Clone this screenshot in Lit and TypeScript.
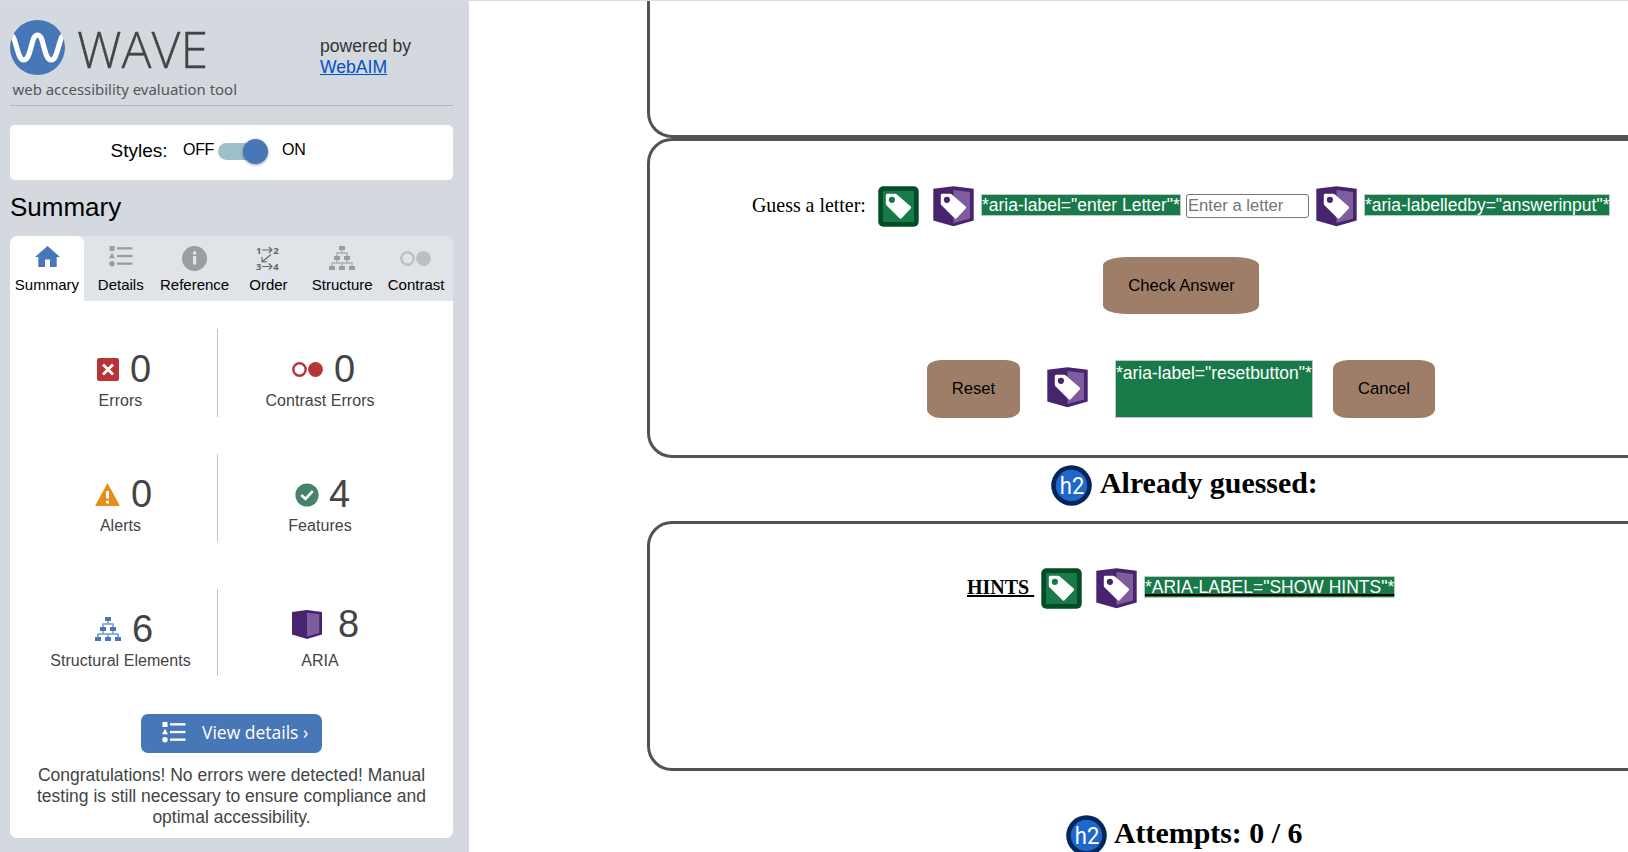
import { LitElement, html, svg, css } from "lit";
import { customElement } from "lit/decorators.js";

const tag = svg`
  <path fill="#fff" d="M9.300 7.700H17c.7 0 1.400.3 1.900.8L32.400 20.300c.9.8.9 1.700.1 2.500L23.900 32c-.8.9-1.800.9-2.600.1L8.700 19.600c-.6-.6-.9-1.200-.9-1.900V9.200c0-.9.6-1.500 1.500-1.500z"/>`;

const labelIcon = html`<svg class="mark" width="41" height="41" viewBox="0 0 41 41">
  <rect x=".3" y=".3" width="40.4" height="40.4" rx="5" fill="#014d25"/>
  <rect x="5" y="5" width="31" height="31" rx="1" fill="#177a48"/>
  ${tag}<circle cx="13.900" cy="13.800" r="3.100" fill="#177a48"/>
</svg>`;

const ariaIcon = html`<svg class="mark" width="41" height="41" viewBox="0 0 41 41">
  <path fill="#48246f" d="M.3 2.800 20.500.2 40.700 2.800V34.600L20.500 40.200.3 34.600z"/>
  <path fill="#7e5c9e" d="M20.500 3.900 37 6v26.600l-16.500 4.300z"/>
  ${tag}<circle cx="13.900" cy="13.800" r="3.100" fill="#48246f"/>
</svg>`;

const h2Icon = html`<svg class="mark" width="41" height="41" viewBox="0 0 41 41">
  <circle cx="20.500" cy="20.500" r="20.300" fill="#04265a"/>
  <circle cx="20.500" cy="20.500" r="15.700" fill="#1f68cb"/>
  <text x="8.800" y="28.800" class="h2t" textLength="24.500" lengthAdjust="spacingAndGlyphs">h2</text>
</svg>`;

const list = (w: number, h: number) => html`<svg width=${w} height=${h} viewBox="0 0 24 21">
  <g fill="currentColor">
    <rect x=".5" y="0" width="5" height="5"/><path d="M3 6.800 6 12.200H0z"/><circle cx="3" cy="17.700" r="2.700"/>
    <rect x="8" y="1.200" width="15.500" height="2.300"/><rect x="8" y="8.900" width="15.500" height="2.300"/><rect x="8" y="16.500" width="15.500" height="2.300"/>
  </g></svg>`;

const tree = html`<svg width="26" height="24" viewBox="0 0 26 24">
  <g fill="currentColor"><rect x="10" width="6" height="4"/><rect x="5" y="10" width="6" height="4"/><rect x="15" y="10" width="6" height="4"/>
  <rect y="20" width="6" height="4"/><rect x="10" y="20" width="6" height="4"/><rect x="20" y="20" width="6" height="4"/></g>
  <path d="M13 4v3M8 10V7h10v3M8 14v3M18 14v3M3 20v-3h20v3M13 17v3" fill="none" stroke="currentColor" stroke-width="1.500" opacity=".75"/>
</svg>`;

const circles = html`<svg width="31" height="15" viewBox="0 0 31 15">
  <circle cx="7.500" cy="7.500" r="6.200" fill="none" stroke="currentColor" stroke-width="2.400"/>
  <circle cx="23.500" cy="7.500" r="7.400" fill="currentColor"/></svg>`;

const tabs = [
  { name: "Summary", cls: "home", icon: html`<svg width="25" height="21" viewBox="0 0 25 21"><path fill="currentColor" d="M12.500 0 25 11h-3.300v10H15v-7.500h-5V21H3.300V11H0z"/></svg>` },
  { name: "Details", cls: "", icon: list(24, 21) },
  { name: "Reference", cls: "", icon: html`<svg width="25" height="25" viewBox="0 0 25 25"><circle cx="12.500" cy="12.500" r="12.500" fill="currentColor"/><rect x="11" y="5.500" width="3.200" height="3" fill="#e0e3e8"/><rect x="11" y="10" width="3.200" height="8.500" fill="#e0e3e8"/></svg>` },
  { name: "Order", cls: "order", icon: html`<svg width="25" height="25" viewBox="0 0 25 25">
    <g class="num"><text x="0" y="7.700">1</text><text x="17.300" y="7.700">2</text><text x="0" y="24.200">3</text><text x="17.300" y="24.200">4</text></g>
    <path d="M6 4h10M12.800 1l3.200 3-3.200 3M6 20.500h10M12.800 17.500l3.200 3-3.200 3M15 8.500 6.500 15.500M6 11v4.800h5" fill="none" stroke="currentColor" stroke-width="1.100"/></svg>` },
  { name: "Structure", cls: "", icon: tree },
  { name: "Contrast", cls: "pale", icon: circles },
];

const stats = [
  { name: "Errors", n: "0", cls: "errors", icon: html`<svg width="22" height="23" viewBox="0 0 22 23"><rect width="22" height="23" rx="2" fill="#b93436"/><path d="M6 6.500l10 10M16 6.500l-10 10" stroke="#fff" stroke-width="2.800"/></svg>` },
  { name: "Contrast Errors", n: "0", cls: "contrast", icon: circles },
  { name: "Alerts", n: "0", cls: "alerts", icon: html`<svg width="25" height="23" viewBox="0 0 25 23"><path fill="#e58e1a" d="M12.500 0 25 23H0z"/><path d="M11 8h3v7.500h-3zM11 17.800h3v2.700h-3z" fill="#fff"/></svg>` },
  { name: "Features", n: "4", cls: "features", icon: html`<svg width="24" height="24" viewBox="0 0 24 24"><circle cx="12" cy="12" r="11.600" fill="#468468"/><path d="M6.300 12l4.200 4 7.200-7.800" fill="none" stroke="#fff" stroke-width="2.600"/></svg>` },
  { name: "Structural Elements", n: "6", cls: "structural", icon: tree },
  { name: "ARIA", n: "8", cls: "aria", icon: html`<svg width="30" height="29" viewBox="0 0 30 29"><path fill="#48246f" d="M0 1.900 15 0l15 1.900v22.600l-15 4.500-15-4.500z"/><path fill="#7e5c9e" d="M15 2.700 27.300 4.200v18.700L15 26.400z"/></svg>` },
];

@customElement("wave-sidebar")
class WaveSidebar extends LitElement {
  static styles = css`
    :host { display: block; width: 469px; height: 851px; padding: 0 16px 0 10px; background: #d4d9e0; font-family: "Liberation Sans", Arial, sans-serif; color: #444; box-sizing: border-box; }
    * { box-sizing: border-box; }
    svg { display: block; overflow: visible; flex: none; }
    .head { height: 105px; border-bottom: 1px solid #b4b6b8; display: flex; }
    .word { font: 300 50px "Open Sans", sans-serif; fill: #444; stroke: #444; stroke-width: .3px; }
    .tagline { font: 15px "Noto Sans", sans-serif; fill: #555; }
    .powered { margin: 35px 0 0 80px; font-size: 17.600px; line-height: 21px; white-space: nowrap; color: #333; }
    .powered a { color: #0050c8; text-decoration: underline; }
    .styles { margin-top: 19px; height: 55px; background: #fff; border-radius: 5px; display: flex; color: #000; padding-left: 100px; white-space: nowrap; }
    .styles .cap { font-size: 19px; line-height: 51px; width: 73px; padding-left: .5px; }
    .styles .opt { font-size: 16px; letter-spacing: -.3px; line-height: 49px; width: 35px; }
    .styles .on { padding-left: 22px; letter-spacing: -.1px; }
    .track { width: 42px; height: 17px; margin-top: 18px; border-radius: 9px; background: #9fc0ca; display: flex; align-items: center; justify-content: flex-end; }
    .knob { width: 25px; height: 25px; margin-right: -8px; flex: none; border-radius: 50%; background: #4877b7; box-shadow: 0 1px 3px rgba(0,0,0,.4); }
    h2 { margin: 0; height: 56px; font-weight: 400; font-size: 26px; line-height: 54px; color: #000; }
    .tabs { display: grid; grid-template-columns: repeat(6, 1fr); height: 65px; background: #e0e3e8; border-radius: 7px 7px 0 0; overflow: hidden; }
    .tab { display: flex; flex-direction: column; align-items: center; padding-top: 10px; color: #9b9ea1; }
    .tab .i { height: 29px; }
    .tab .l { font-size: 15px; line-height: 20px; color: #000; }
    .home { background: #fff; color: #4877b7; border-radius: 7px 7px 0 0; }
    .home .i { padding-left: 2px; }
    .order { color: #666; }
    .num { font: bold 9.500px "Noto Sans", sans-serif; fill: #666; }
    .pale { color: #bcbfc4; }
    .pale .i { padding: 5px 2px 0 0; }
    .panel { height: 537px; background: #fff; border-radius: 0 0 7px 7px; padding-top: 28px; }
    .grid { display: grid; grid-template-columns: 196px 204px; grid-template-rows: 88px 88px 87px; row-gap: 37px; padding-left: 12px; height: 347px; }
    .stat { display: flex; flex-direction: column; text-align: center; padding-top: 20px; }
    .stat:nth-child(odd) { border-right: 1px solid #c4c4c4; }
    .stat:nth-child(odd) .l { padding-left: 2px; }
    .stat:nth-child(n+5) { margin-top: 10px; margin-bottom: -10px; }
    .fig { display: flex; height: 42px; }
    .fig b { font-weight: 400; font-size: 38px; line-height: 41px; }
    .stat .l { font-size: 16px; letter-spacing: .05px; line-height: 20px; }
    .errors .fig { padding-left: 75px; gap: 11px; } .errors svg { margin-top: 9px; }
    .contrast .fig { padding-left: 74px; gap: 11px; color: #444; } .contrast svg { margin-top: 13px; color: #b93436; }
    .alerts .fig { padding-left: 73px; gap: 11px; } .alerts svg { margin-top: 9px; }
    .features .fig { padding-left: 77px; gap: 10px; } .features svg { margin-top: 9px; }
    .structural .fig { padding-left: 73px; gap: 11px; } .structural svg { margin-top: 8px; color: #4877b7; }
    .aria .fig { padding-left: 74px; gap: 16px; } .aria svg { margin-top: .5px; } .aria b { margin-top: -5px; }
    .btn { margin: 38px 0 0 131px; width: 181px; height: 39px; border-radius: 7px; background: #4877b7; color: #fff; display: flex; padding-left: 21px; font: 17.500px/37px "Open Sans", sans-serif; white-space: nowrap; }
    .btn svg { margin: 8px 16px 0 0; }
    p { margin: 12px 0 0; text-align: center; font-size: 17.500px; line-height: 21px; white-space: nowrap; }
  `;
  render() {
    return html`
      <div class="head">
        <svg width="230" height="104" viewBox="0 0 230 104">
          <defs><clipPath id="c"><circle cx="27.500" cy="46.500" r="27.500"/></clipPath></defs>
          <circle cx="27.500" cy="46.500" r="27.500" fill="#4877b7"/>
          <path clip-path="url(#c)" d="M0 33C2.500 33.500 4 37 6 44 8.200 52 9.800 59 13.800 59S19.500 52 21 46.500 23.500 34 27.500 34 32.500 41 34 46.500 37.200 59 41.200 59 46.800 52 49 44C51 37 52.500 33.500 55 33" fill="none" stroke="#fff" stroke-width="5.200"/>
          <text class="word" x="67" y="66.500" textLength="131" lengthAdjust="spacingAndGlyphs">WAVE</text>
          <text class="tagline" x="2.500" y="94" textLength="224.500" lengthAdjust="spacingAndGlyphs">web accessibility evaluation tool</text>
        </svg>
        <div class="powered">powered by<br /><a>WebAIM</a></div>
      </div>
      <div class="styles"><span class="cap">Styles:</span><span class="opt">OFF</span><span class="track"><span class="knob"></span></span><span class="opt on">ON</span></div>
      <h2>Summary</h2>
      <div class="tabs">${tabs.map((t) => html`<div class="tab ${t.cls}"><div class="i">${t.icon}</div><div class="l">${t.name}</div></div>`)}</div>
      <div class="panel">
        <div class="grid">${stats.map((s) => html`<div class="stat ${s.cls}"><div class="fig">${s.icon}<b>${s.n}</b></div><div class="l">${s.name}</div></div>`)}</div>
        <div class="btn">${list(24, 21)}View details ›</div>
        <p>Congratulations! No errors were detected! Manual<br />testing is still necessary to ensure compliance and<br />optimal accessibility.</p>
      </div>`;
  }
}

@customElement("game-page")
class GamePage extends LitElement {
  static styles = css`
    :host { display: block; flex: none; width: 1159px; height: 851px; overflow: hidden; background: #fff; padding-left: 178px; box-sizing: border-box; font: 20px "Liberation Serif", "Times New Roman", serif; color: #000; }
    * { box-sizing: border-box; }
    svg { display: block; flex: none; }
    .box { width: 1068px; border: 3px solid #525252; border-radius: 25px; }
    .first { height: 137px; border-top: 0; border-radius: 0 0 25px 25px; }
    .guess { height: 320px; padding-top: 45px; }
    .hints { height: 250px; padding-top: 44px; }
    .row { display: flex; white-space: nowrap; }
    .guess .one { padding-left: 102px; height: 71px; }
    .q { width: 126px; line-height: 38px; font-size: 19.900px; }
    .note { font: 17.500px/20px "Liberation Sans", Arial, sans-serif; background: #177a48; color: #fff; border: 1px solid #c0c8c4; height: 22px; margin-top: 8px; }
    .mark { margin-right: 14px; }
    .near .mark { margin-right: 7px; }
    .h2t { font: 24px Roboto, sans-serif; fill: #fff; }
    .n1 { width: 200px; } .n2 { width: 246px; }
    .field { width: 123px; height: 24px; margin: 8px 7px 0 5px; border: 1px solid #767676; border-radius: 3px; font: 16.667px/20px "Liberation Sans", Arial, sans-serif; color: #757575; padding: 1px 1px; }
    .btn { background: #9f7e69; border-radius: 15%; font: 16.667px "Liberation Sans", Arial, sans-serif; display: flex; align-items: center; justify-content: center; height: 58px; padding-bottom: 1px; }
    .check { margin: 0 0 46px 453px; width: 156px; height: 57px; padding: 0 0 0 1px; }
    .two { padding-left: 277px; }
    .reset { width: 93px; margin-right: 27px; } .cancel { width: 102px; margin-left: 20px; }
    .two .mark { margin: 7px 27px 0 0; }
    .tall { height: 58px; margin-top: 0; padding-top: 2px; width: 198px; }
    h2 { margin: 0; font-size: 29.900px; display: flex; white-space: nowrap; }
    .already { height: 63px; padding: 7px 0 0 404px; line-height: 35px; }
    .already .near { margin-right: 1px; }
    .attempts { padding: 44px 0 0 419px; line-height: 35px; }
    .three { padding-left: 317px; }
    .h { font-weight: 700; line-height: 38px; margin-right: 7px; height: 41px; white-space: pre; text-decoration: underline; text-decoration-thickness: 2px; width: 67px; }
    .n3 { width: 251px; text-decoration: underline; text-decoration-color: #000; text-decoration-thickness: 2px; text-decoration-skip-ink: none; }
  `;
  render() {
    return html`
      <div class="box first"></div>
      <div class="box guess">
        <div class="row one"><span class="q">Guess a letter:</span>${labelIcon}<span class="near">${ariaIcon}</span><span class="note n1">*aria-label="enter Letter"*</span><span class="field">Enter a letter</span><span class="near">${ariaIcon}</span><span class="note n2">*aria-labelledby="answerinput"*</span></div>
        <div class="btn check">Check Answer</div>
        <div class="row two"><span class="btn reset">Reset</span>${ariaIcon}<span class="note tall">*aria-label="resetbutton"*</span><span class="btn cancel">Cancel</span></div>
      </div>
      <h2 class="already"><span class="near">${h2Icon}</span>Already guessed:</h2>
      <div class="box hints">
        <div class="row three"><span class="h">HINTS </span>${labelIcon}<span class="near">${ariaIcon}</span><span class="note n3">*ARIA-LABEL="SHOW HINTS"*</span></div>
      </div>
      <h2 class="attempts"><span class="near">${h2Icon}</span>Attempts: 0 / 6</h2>`;
  }
}

@customElement("app-root")
class AppRoot extends LitElement {
  static styles = css`
    :host { display: block; width: 1628px; height: 852px; overflow: hidden; background: #fff; }
    .shell { display: flex; border-top: 1px solid #dcdcdc; }
  `;
  render() {
    return html`<div class="shell"><wave-sidebar></wave-sidebar><game-page></game-page></div>`;
  }
}
